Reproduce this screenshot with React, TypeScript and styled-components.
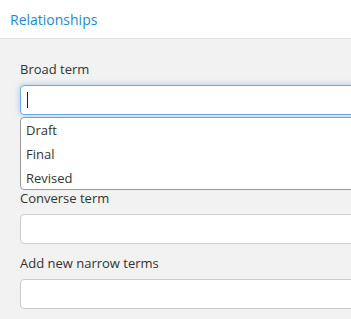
import React from 'react'
import styled, { createGlobalStyle } from 'styled-components'

const GlobalStyle = createGlobalStyle`
    html, body {
        margin: 0;
        padding: 0;
        background: #f2f2f2;
        font-family: 'Open Sans', 'Liberation Sans', sans-serif;
        overflow: hidden;
    }
`

const Header = styled.div`
    height: 38px;
    display: flex;
    align-items: center;
    padding-left: 10px;
    background: #fff;
    border-bottom: 1px solid #e3e3e3;
    color: #1a8ad6;
    font-size: 14px;
`

const Body = styled.div`
    padding: 21px 0 0 20px;
    display: flex;
    flex-direction: column;
`

const Label = styled.div<{ space: number }>`
    color: #333;
    font-size: 13px;
    line-height: 18px;
    margin-top: ${(p) => p.space}px;
    margin-bottom: 7px;
`

const Input = styled.div<{ focused?: boolean }>`
    width: 360px;
    height: 30px;
    flex-shrink: 0;
    box-sizing: border-box;
    background: #fff;
    border-radius: 4px;
    border: 1px solid ${(p) => (p.focused ? '#66afe9' : '#cccccc')};
    box-shadow: ${(p) =>
        p.focused ? '0 0 6px rgba(102, 175, 233, 0.6)' : 'none'};
    display: flex;
    align-items: center;
    padding-left: 6px;
`

const Caret = styled.span`
    width: 1px;
    height: 16px;
    background: #222;
`

const List = styled.div`
    margin-top: 2px;
    width: 360px;
    height: 73px;
    flex-shrink: 0;
    overflow: hidden;
    box-sizing: border-box;
    background: #fff;
    border: 1px solid #999;
    border-radius: 4px;
`

const Option = styled.div`
    height: 24px;
    line-height: 24px;
    padding-left: 5px;
    color: #333;
    font-size: 13px;
`

export default function App() {
    return (
        <>
            <GlobalStyle />
            <Header>Relationships</Header>
            <Body>
                <Label space={0}>Broad term</Label>
                <Input focused>
                    <Caret />
                </Input>
                <List>
                    <Option>Draft</Option>
                    <Option>Final</Option>
                    <Option>Revised</Option>
                </List>
                <Label space={-1}>Converse term</Label>
                <Input />
                <Label space={10}>Add new narrow terms</Label>
                <Input />
            </Body>
        </>
    )
}
